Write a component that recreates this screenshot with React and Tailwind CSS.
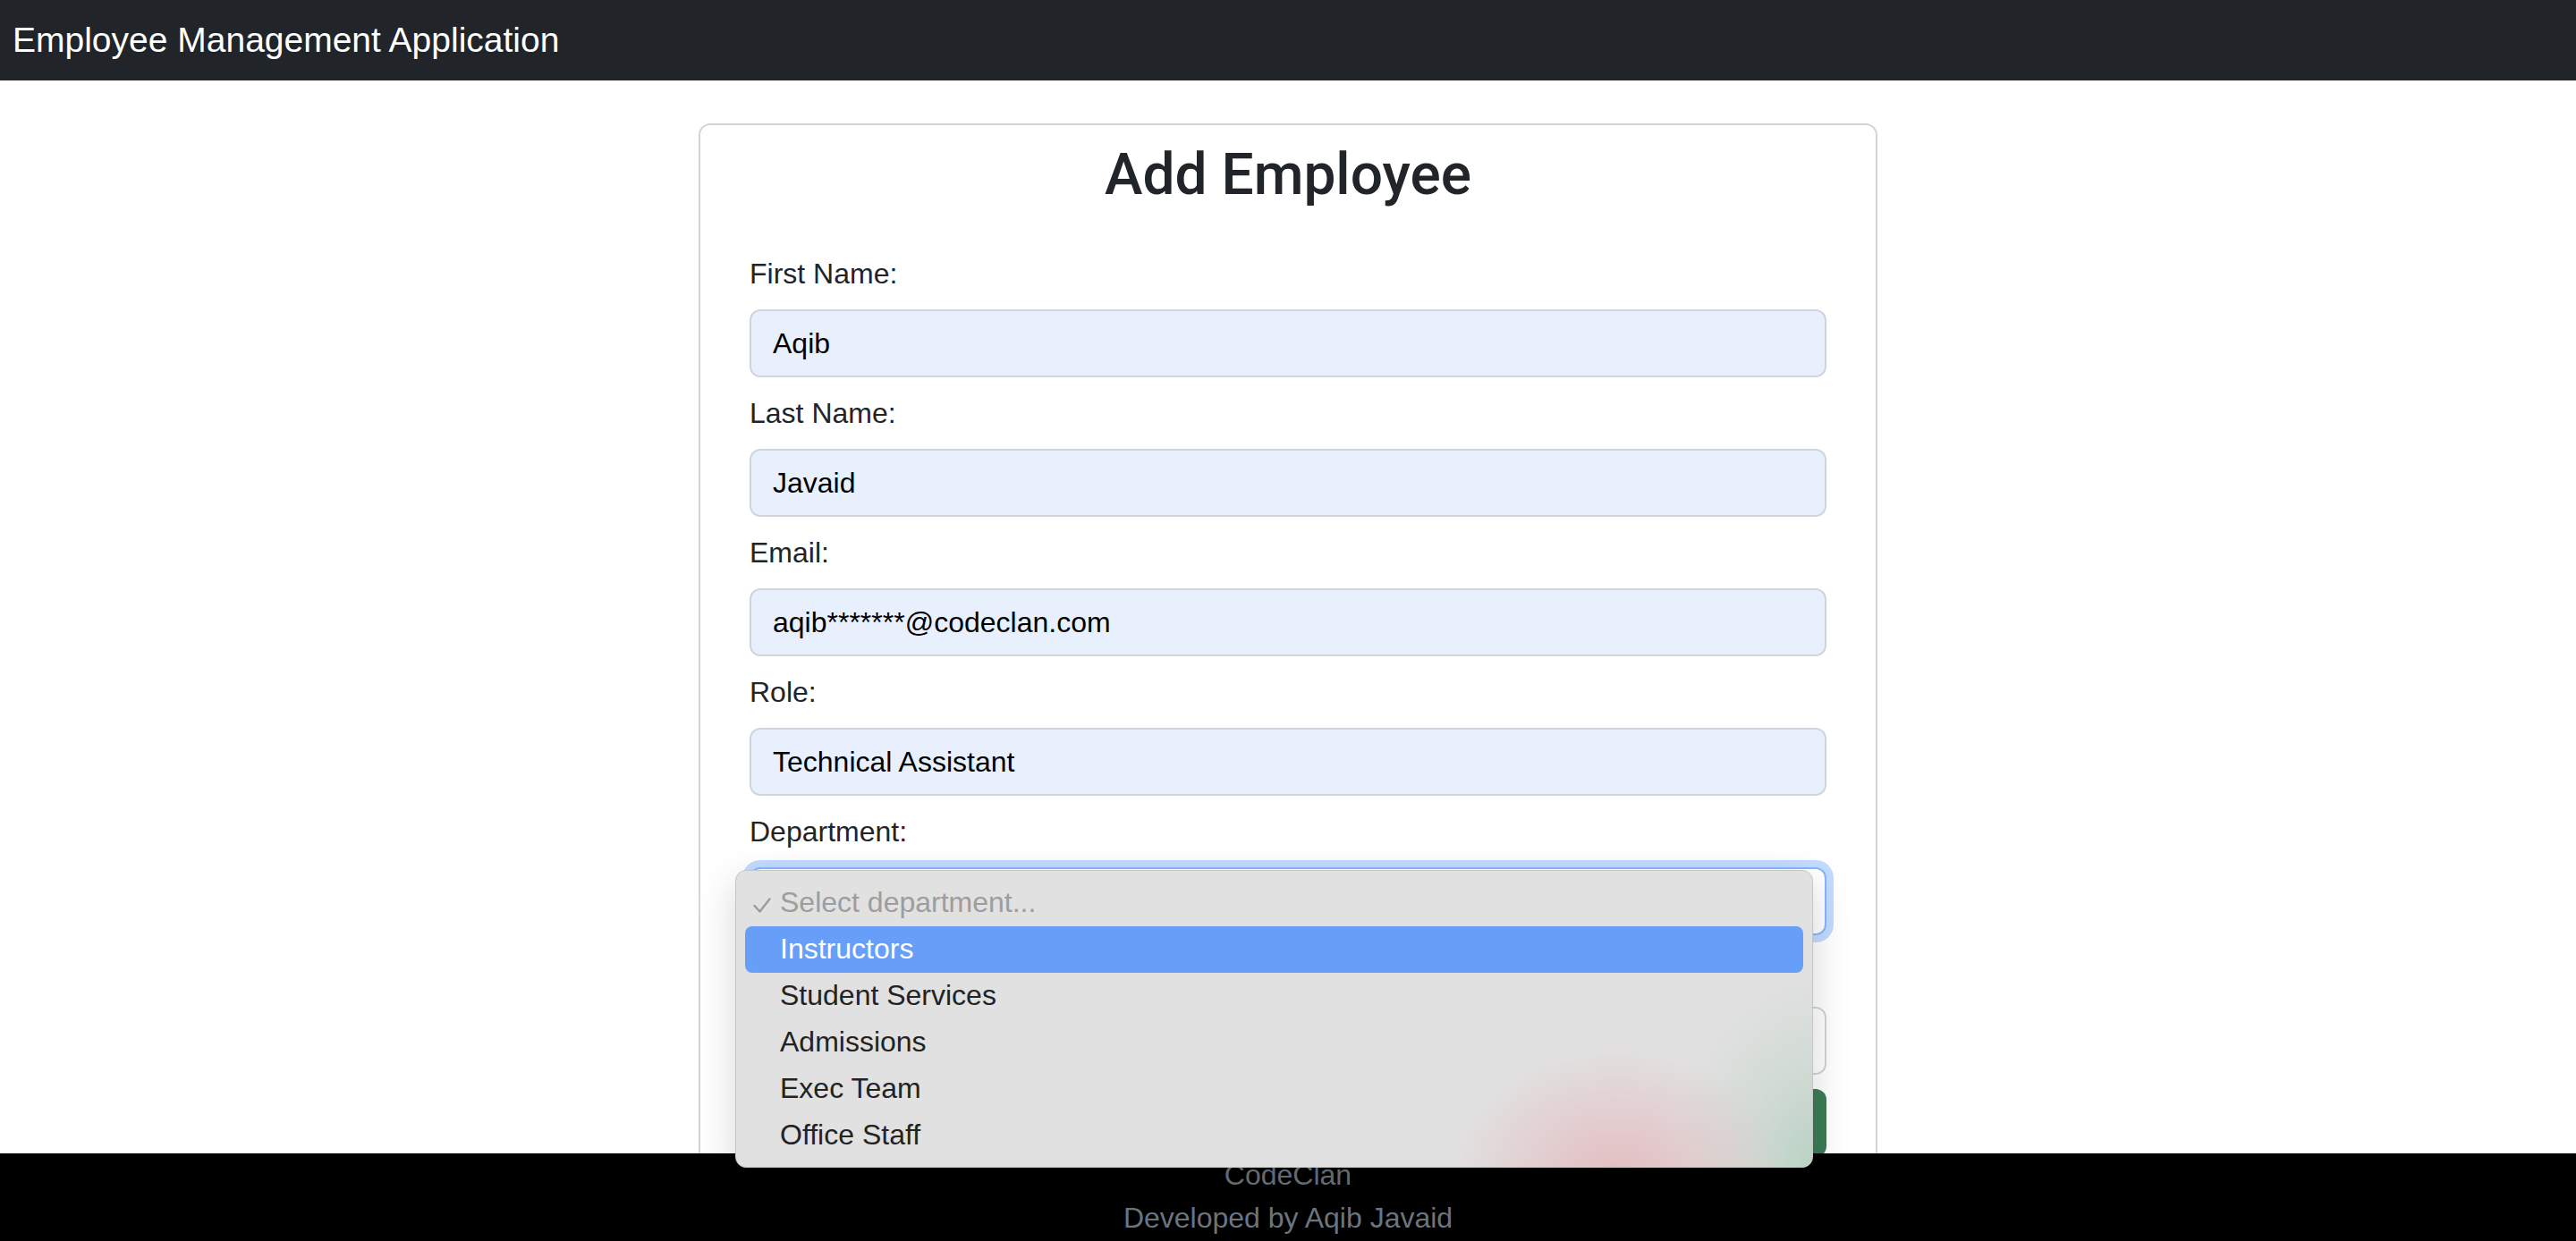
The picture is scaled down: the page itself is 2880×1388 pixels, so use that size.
import React from 'react';

const fields = [
  { label: 'First Name:', value: 'Aqib' },
  { label: 'Last Name:', value: 'Javaid' },
  { label: 'Email:', value: 'aqib*******@codeclan.com' },
  { label: 'Role:', value: 'Technical Assistant' },
];

const departments = ['Instructors', 'Student Services', 'Admissions', 'Exec Team', 'Office Staff'];

const CheckMark = () => (
  <svg width="20" height="17" viewBox="0 0 20 17" className="mt-[19px] ml-[9px]">
    <path d="M1.5 9 L7.5 15.5 L18.5 1.5" fill="none" stroke="#9b9b9b" strokeWidth="2.4" strokeLinecap="round" strokeLinejoin="round" />
  </svg>
);

const DepartmentMenu = () => (
  <div className="absolute left-[-16px] top-[3px] z-20 h-[333px] w-[1205px] overflow-hidden rounded-[12px] border border-[#c6c6c6] bg-[#e1e1e1] py-[10px] shadow-[0_14px_44px_rgba(0,0,0,0.16)]">
    {/* vibrancy tint from what sits behind the menu */}
    <div className="pointer-events-none absolute inset-0 bg-[image:radial-gradient(ellipse_190px_150px_at_985px_345px,rgba(228,188,192,1),rgba(228,188,192,0)),radial-gradient(ellipse_170px_220px_at_1215px_330px,rgba(184,209,194,1),rgba(184,209,194,0.35)_55%,rgba(184,209,194,0))]" />

    <div className="relative mx-[10px] flex h-[52px] pt-[1px] text-[32px] leading-[48px] text-[#9d9d9d]">
      <span className="w-[39px] shrink-0">
        <CheckMark />
      </span>
      <span>Select department...</span>
    </div>
    {departments.map((d, i) => (
      <div
        key={d}
        className={
          i === 0
            ? 'relative mx-[10px] flex h-[52px] rounded-[8px] bg-[#669ef8] pt-[1px] pl-[39px] text-[32px] leading-[48px] text-white'
            : 'relative mx-[10px] flex h-[52px] pt-[1px] pl-[39px] text-[32px] leading-[48px] text-[#232323]'
        }
      >
        {d}
      </div>
    ))}
  </div>
);

export default function App() {
  return (
    <div className="flex h-[1388px] flex-col overflow-hidden bg-white font-['Liberation_Sans',Arial,sans-serif] text-[#212529]">
      {/* Navbar */}
      <header className="h-[90px] shrink-0 bg-[#212529] pl-[14px] pt-[15px]">
        <span className="text-[39px] leading-[60px] text-white">Employee Management Application</span>
      </header>

      <main className="min-h-0 flex-1 pt-[48px]">
        <div className="mx-auto w-[1318px] rounded-[13px] border-2 border-[#d4d4d4] px-[55px] pt-[18px] pb-[40px]">
          <h2 className="mb-[47px] text-center font-['Roboto',sans-serif] text-[64px] leading-[1.2] font-medium">
            Add Employee
          </h2>

          <form>
            {fields.map((f) => (
              <div key={f.label}>
                <label className="mb-[16px] block text-[32px] leading-[48px]">{f.label}</label>
                <div className="mb-[16px] h-[76px] rounded-[12px] border-2 border-[#cfd5dc] bg-[#e8f0fe] px-[24px] py-[12px] text-[32px] leading-[48px] text-black">
                  {f.value}
                </div>
              </div>
            ))}

            {/* Department select, open */}
            <label className="mb-[16px] block text-[32px] leading-[48px]">Department:</label>
            <div className="relative mb-[16px]">
              <div className="h-[76px] rounded-[12px] border-2 border-[#86b7fe] bg-white shadow-[0_0_0_8px_rgba(13,110,253,0.25)]" />
              <DepartmentMenu />
            </div>

            {/* field hidden under the open menu */}
            <div className="mb-[16px] h-[48px]" />
            <div className="mb-[16px] h-[76px] rounded-[12px] border-2 border-[#ced4da] bg-white" />

            <button type="button" className="block h-[76px] w-full rounded-[12px] bg-[#3b7d55]" />
          </form>
        </div>
      </main>

      <footer className="relative z-10 h-[98px] shrink-0 bg-black text-center text-[32px] leading-[48px] text-[#6c757d]">
        <p>CodeClan</p>
        <p>Developed by Aqib Javaid</p>
      </footer>
    </div>
  );
}
